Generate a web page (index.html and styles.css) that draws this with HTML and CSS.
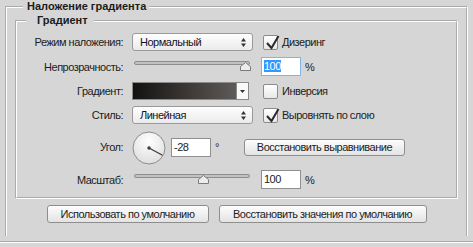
FILE: index.html
```html
<!DOCTYPE html>
<html lang="ru">
<head>
    <meta charset="UTF-8">
    <meta name="viewport" content="width=device-width, initial-scale=1.0">
    <title>Наложение градиента</title>
    <link rel="stylesheet" href="styles.css">
</head>
<body>
    <fieldset class="group outer">
        <legend>Наложение градиента</legend>

        <fieldset class="group inner">
            <legend>Градиент</legend>

            <div class="rows">
                <!-- режим наложения -->
                <div class="row">
                    <span class="label">Режим наложения:</span>
                    <div class="select">
                        <span>Нормальный</span>
                        <svg class="updown" width="5" height="9" viewBox="0 0 5 9"><path d="M0 3.5 L2.5 0 L5 3.5 Z M0 5.5 L5 5.5 L2.5 9 Z" fill="#333"/></svg>
                    </div>
                    <label class="check">
                        <span class="box">
                            <svg width="17" height="16" viewBox="0 0 17 16"><polyline points="4,8 8.5,13 15.5,1" fill="none" stroke="#2a2a2a" stroke-width="2"/></svg>
                        </span>
                        Дизеринг
                    </label>
                </div>

                <!-- непрозрачность -->
                <div class="row row-slider">
                    <span class="label">Непрозрачность:</span>
                    <div class="slider">
                        <svg class="thumb" style="left: 105px" width="11" height="9" viewBox="0 0 11 9"><path d="M0.5 8.5 L0.5 4.5 L5.5 0.5 L10.5 4.5 L10.5 8.5 Z" fill="#ececec" stroke="#7c7c7c"/></svg>
                    </div>
                    <div class="value">
                        <span class="field focus"><span class="sel">100</span></span>
                        <span>%</span>
                    </div>
                </div>

                <!-- градиент -->
                <div class="row">
                    <span class="label">Градиент:</span>
                    <div class="gradient">
                        <div class="gradient-fill"></div>
                        <div class="gradient-drop">
                            <svg width="5" height="3" viewBox="0 0 5 3"><path d="M0 0 L5 0 L2.5 3 Z" fill="#333"/></svg>
                        </div>
                    </div>
                    <label class="check">
                        <span class="box"></span>
                        Инверсия
                    </label>
                </div>

                <!-- стиль -->
                <div class="row">
                    <span class="label">Стиль:</span>
                    <div class="select">
                        <span>Линейная</span>
                        <svg class="updown" width="5" height="9" viewBox="0 0 5 9"><path d="M0 3.5 L2.5 0 L5 3.5 Z M0 5.5 L5 5.5 L2.5 9 Z" fill="#333"/></svg>
                    </div>
                    <label class="check">
                        <span class="box">
                            <svg width="17" height="16" viewBox="0 0 17 16"><polyline points="4,8 8.5,13 15.5,1" fill="none" stroke="#2a2a2a" stroke-width="2"/></svg>
                        </span>
                        Выровнять по слою
                    </label>
                </div>

                <!-- угол -->
                <div class="row row-angle">
                    <span class="label">Угол:</span>
                    <div class="angle">
                        <svg class="dial" width="34" height="34" viewBox="0 0 34 34">
                            <defs>
                                <radialGradient id="dial-bg" cx="0.5" cy="0.3" r="0.7">
                                    <stop offset="0" stop-color="#ffffff"/>
                                    <stop offset="1" stop-color="#dedede"/>
                                </radialGradient>
                            </defs>
                            <circle cx="17" cy="17" r="16" fill="url(#dial-bg)" stroke="#8c8c8c"/>
                            <line x1="17" y1="17" x2="30.5" y2="24.3" stroke="#3c3c3c" stroke-width="1.3"/>
                            <circle cx="17" cy="17" r="1.7" fill="#3c3c3c"/>
                        </svg>
                        <span class="field">-28</span>
                        <span class="degree">°</span>
                        <button class="btn btn-align">Восстановить выравнивание</button>
                    </div>
                </div>

                <!-- масштаб -->
                <div class="row row-slider">
                    <span class="label">Масштаб:</span>
                    <div class="slider">
                        <svg class="thumb" style="left: 63px" width="11" height="9" viewBox="0 0 11 9"><path d="M0.5 8.5 L0.5 4.5 L5.5 0.5 L10.5 4.5 L10.5 8.5 Z" fill="#ececec" stroke="#7c7c7c"/></svg>
                    </div>
                    <div class="value">
                        <span class="field">100</span>
                        <span>%</span>
                    </div>
                </div>
            </div>
        </fieldset>

        <div class="actions">
            <button class="btn btn-default">Использовать по умолчанию</button>
            <button class="btn btn-reset">Восстановить значения по умолчанию</button>
        </div>
    </fieldset>

    <div class="separator"></div>
</body>
</html>
```

FILE: styles.css
```css
body {
    margin: 0;
    width: 473px;
    height: 247px;
    overflow: hidden;
    background: #d6d6d6;
    font-family: "Liberation Sans", Arial, sans-serif;
    font-size: 11px;
    letter-spacing: -0.5px;
    color: #1c1c1c;
}
.group {
    margin: 0;
    padding: 0;
    min-width: 0;
    border: 2px groove #fff;
}
.group legend {
    font-weight: bold;
    line-height: 13px;
    letter-spacing: 0;
}
.outer {
    margin: 0 5px;
    padding: 1px 0 13px;
    border-bottom: none;
}
.outer > legend {
    margin-left: 16px;
    padding: 0 3px 0 4px;
}
.inner {
    margin: 0 8px;
    padding: 5px 0 7px;
}
.inner > legend {
    margin-left: 9px;
    padding: 0 6px 0 11px;
}
.rows {
    display: flex;
    flex-direction: column;
    gap: 4px;
}
.row {
    display: grid;
    grid-template-columns: 106px 121px 1fr;
    column-gap: 9px;
    align-items: center;
    height: 20px;
}
.row-slider {
    height: 21px;
}
.row-angle {
    height: 36px;
}
.label {
    text-align: right;
}
.select {
    display: flex;
    align-items: center;
    justify-content: space-between;
    height: 18px;
    box-sizing: border-box;
    padding: 0 6px 0 7px;
    border: 1px solid #9a9a9a;
    border-radius: 3px;
    background: linear-gradient(#fefefe, #ebebeb);
    color: #121226;
}
.check {
    display: flex;
    align-items: center;
    gap: 4px;
    margin-left: 1px;
}
.box {
    position: relative;
    width: 15px;
    height: 15px;
    box-sizing: border-box;
    border: 1px solid #8b8b8b;
    border-radius: 2px;
    background: linear-gradient(#ffffff, #e8e8e8);
}
.box svg {
    position: absolute;
    left: -1px;
    top: -1px;
    overflow: visible;
}
.slider {
    position: relative;
    align-self: start;
    margin: 5px 3px 0 2px;
    height: 4px;
    box-sizing: border-box;
    border: 1px solid #8e8e8e;
    border-radius: 2px;
    background: #c2c2c2;
}
.thumb {
    position: absolute;
    top: 0;
}
.value {
    display: flex;
    align-items: center;
    gap: 4px;
    margin-left: -1px;
}
.field {
    display: block;
    width: 40px;
    height: 19px;
    box-sizing: border-box;
    padding: 0 2px;
    border: 1px solid #8f8f8f;
    background: #fff;
    line-height: 17px;
}
.field.focus {
    border-color: #80b3e6;
}
.sel {
    background: #3399ff;
    color: #fff;
}
.gradient {
    display: flex;
    width: 117px;
    height: 18px;
    box-sizing: border-box;
    border: 1px solid #8a8a8a;
}
.gradient-fill {
    flex: 1;
    background: linear-gradient(to right, #141210, #5e5a58);
}
.gradient-drop {
    width: 11px;
    display: flex;
    align-items: center;
    justify-content: center;
    border-left: 1px solid #8a8a8a;
    background: #f8f8f8;
}
.angle {
    grid-column: 2 / -1;
    display: flex;
    align-items: center;
}
.dial {
    display: block;
    margin-top: 1px;
}
.angle .field {
    margin-left: 5px;
}
.degree {
    margin-left: 4px;
}
.btn {
    height: 17px;
    box-sizing: border-box;
    padding: 0;
    border: 1px solid #8e8e8e;
    border-radius: 3px;
    background: linear-gradient(#fdfdfd, #e3e3e3);
    font: inherit;
    letter-spacing: inherit;
    color: inherit;
}
.btn-align {
    width: 161px;
    margin-left: 25px;
}
.actions {
    display: flex;
    justify-content: center;
    gap: 10px;
    margin-top: 6px;
}
.actions .btn {
    height: 18px;
}
.btn-default {
    width: 162px;
}
.btn-reset {
    width: 208px;
}
.separator {
    margin-top: 5px;
    border-top: 1px solid #a8a8a8;
    border-bottom: 1px solid #fff;
}
```
